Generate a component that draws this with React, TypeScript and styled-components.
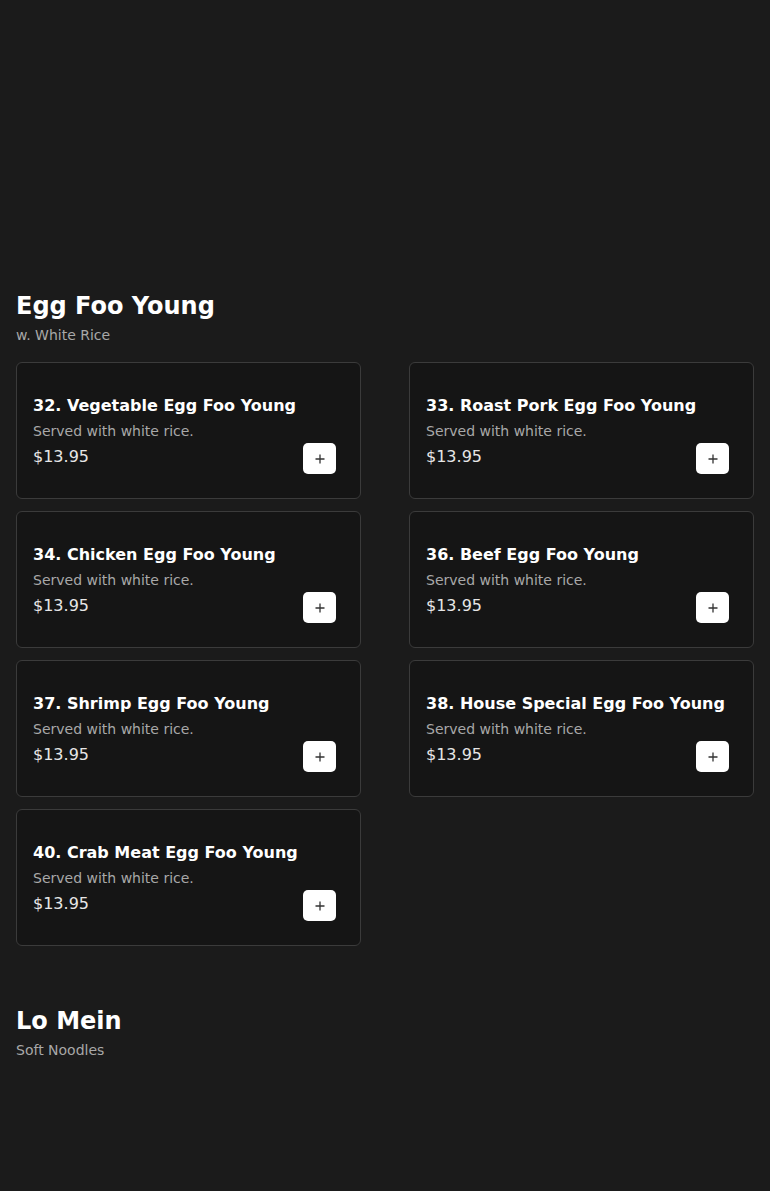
import React from "react";
import styled, { createGlobalStyle } from "styled-components";

const GlobalStyle = createGlobalStyle`
  html, body {
    margin: 0;
    padding: 0;
    background: #1b1b1b;
    font-family: "DejaVu Sans", "Noto Sans", sans-serif;
    color: #fff;
  }
  * { box-sizing: border-box; }
`;

const Page = styled.main`
  min-height: 1191px;
  padding: 290px 16px 0;
  display: flex;
  flex-direction: column;
  gap: 59px;
`;

const Section = styled.section`
  display: flex;
  flex-direction: column;
`;

const SectionTitle = styled.h2`
  margin: 0;
  font-size: 24px;
  line-height: 32px;
  font-weight: 700;
  color: #fff;
`;

const SectionNote = styled.p`
  margin: 3px 0 0;
  font-size: 14px;
  line-height: 20px;
  color: #a8a8a8;
`;

const Grid = styled.div`
  margin-top: 17px;
  display: grid;
  grid-template-columns: 1fr 1fr;
  column-gap: 48px;
  row-gap: 12px;
`;

const Card = styled.article`
  background: #151515;
  border: 1px solid #3b3b3b;
  border-radius: 6px;
  padding: 31px 24px 24px 16px;
  display: flex;
  flex-direction: column;
`;

const ItemName = styled.h3`
  margin: 0;
  font-size: 16px;
  line-height: 24px;
  font-weight: 700;
  color: #fff;
  white-space: nowrap;
`;

const ItemDesc = styled.p`
  margin: 3px 0 0;
  font-size: 14px;
  line-height: 20px;
  color: #a8a8a8;
`;

const PriceRow = styled.div`
  margin-top: 2px;
  display: flex;
  justify-content: space-between;
  align-items: flex-start;
`;

const Price = styled.span`
  margin-top: 2px;
  font-size: 16px;
  line-height: 24px;
  color: #e6e6e6;
`;

const AddButton = styled.button`
  width: 33px;
  height: 31px;
  border: none;
  border-radius: 5px;
  background: #fff;
  color: #222;
  font-family: inherit;
  padding: 0;
  display: flex;
  align-items: center;
  justify-content: center;
  cursor: pointer;
`;

type Item = { name: string; desc: string; price: string };

const eggFooYoung: Item[] = [
  "32. Vegetable Egg Foo Young",
  "33. Roast Pork Egg Foo Young",
  "34. Chicken Egg Foo Young",
  "36. Beef Egg Foo Young",
  "37. Shrimp Egg Foo Young",
  "38. House Special Egg Foo Young",
  "40. Crab Meat Egg Foo Young",
].map((name) => ({ name, desc: "Served with white rice.", price: "$13.95" }));

const MenuCard = ({ item }: { item: Item }) => (
  <Card>
    <ItemName>{item.name}</ItemName>
    <ItemDesc>{item.desc}</ItemDesc>
    <PriceRow>
      <Price>{item.price}</Price>
      <AddButton aria-label={`Add ${item.name}`}>
        <svg width="10" height="10" viewBox="0 0 10 10">
          <path d="M5 0.5v9M0.5 5h9" stroke="#333" strokeWidth="1.3" />
        </svg>
      </AddButton>
    </PriceRow>
  </Card>
);

export default function App() {
  return (
    <>
      <GlobalStyle />
      <Page>
        <Section>
          <SectionTitle>Egg Foo Young</SectionTitle>
          <SectionNote>w. White Rice</SectionNote>
          <Grid>
            {eggFooYoung.map((item) => (
              <MenuCard key={item.name} item={item} />
            ))}
          </Grid>
        </Section>
        <Section>
          <SectionTitle>Lo Mein</SectionTitle>
          <SectionNote>Soft Noodles</SectionNote>
        </Section>
      </Page>
    </>
  );
}
